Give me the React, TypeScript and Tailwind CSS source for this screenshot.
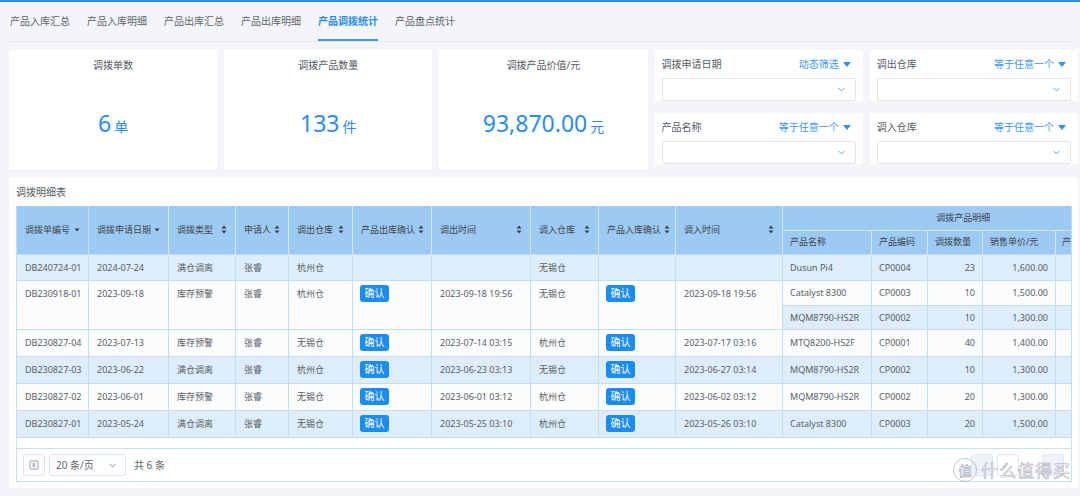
import { ChevronDown } from "lucide-react"

const tabs = ["产品入库汇总", "产品入库明细", "产品出库汇总", "产品出库明细", "产品调拨统计", "产品盘点统计"]

const stats = [
  { title: "调拨单数", value: "6", unit: "单" },
  { title: "调拨产品数量", value: "133", unit: "件" },
  { title: "调拨产品价值/元", value: "93,870.00", unit: "元" },
]

const cols = [72, 80, 67, 53, 64, 79, 99, 68, 77, 107, 89, 56, 55, 73, 18]

const heads = [
  { label: "调拨单编号", icon: "caret" },
  { label: "调拨申请日期", icon: "caret" },
  { label: "调拨类型", icon: "sort" },
  { label: "申请人", icon: "sort" },
  { label: "调出仓库", icon: "sort" },
  { label: "产品出库确认", icon: "sort" },
  { label: "调出时间", icon: "sort" },
  { label: "调入仓库", icon: "sort" },
  { label: "产品入库确认", icon: "sort" },
  { label: "调入时间", icon: "sort" },
]

type Item = [string, string, number, string]

const orders: {
  id: string
  date: string
  type: string
  person: string
  from: string
  outOk: boolean
  outTime: string
  to: string
  inOk: boolean
  inTime: string
  items: Item[]
}[] = [
  { id: "DB240724-01", date: "2024-07-24", type: "满仓调离", person: "张睿", from: "杭州仓", outOk: false, outTime: "", to: "无锡仓", inOk: false, inTime: "", items: [["Dusun Pi4", "CP0004", 23, "1,600.00"]] },
  {
    id: "DB230918-01", date: "2023-09-18", type: "库存预警", person: "张睿", from: "杭州仓", outOk: true, outTime: "2023-09-18 19:56", to: "无锡仓", inOk: true, inTime: "2023-09-18 19:56",
    items: [
      ["Catalyst 8300", "CP0003", 10, "1,500.00"],
      ["MQM8790-HS2R", "CP0002", 10, "1,300.00"],
    ],
  },
  { id: "DB230827-04", date: "2023-07-13", type: "库存预警", person: "张睿", from: "无锡仓", outOk: true, outTime: "2023-07-14 03:15", to: "杭州仓", inOk: true, inTime: "2023-07-17 03:16", items: [["MTQ8200-HS2F", "CP0001", 40, "1,400.00"]] },
  { id: "DB230827-03", date: "2023-06-22", type: "满仓调离", person: "张睿", from: "杭州仓", outOk: true, outTime: "2023-06-23 03:13", to: "无锡仓", inOk: true, inTime: "2023-06-27 03:14", items: [["MQM8790-HS2R", "CP0002", 10, "1,300.00"]] },
  { id: "DB230827-02", date: "2023-06-01", type: "库存预警", person: "张睿", from: "无锡仓", outOk: true, outTime: "2023-06-01 03:12", to: "杭州仓", inOk: true, inTime: "2023-06-02 03:12", items: [["MQM8790-HS2R", "CP0002", 20, "1,300.00"]] },
  { id: "DB230827-01", date: "2023-05-24", type: "满仓调离", person: "张睿", from: "无锡仓", outOk: true, outTime: "2023-05-25 03:10", to: "杭州仓", inOk: true, inTime: "2023-05-26 03:10", items: [["Catalyst 8300", "CP0003", 20, "1,500.00"]] },
]

const filters = [
  { label: "调拨申请日期", mode: "动态筛选" },
  { label: "调出仓库", mode: "等于任意一个" },
  { label: "产品名称", mode: "等于任意一个" },
  { label: "调入仓库", mode: "等于任意一个" },
]

function SortIcon() {
  return (
    <svg width="6" height="9" viewBox="0 0 6 9" className="shrink-0">
      <path d="M3 0.5 L5.5 3.5 H0.5 Z" fill="#3a3f47" />
      <path d="M3 8.5 L5.5 5.5 H0.5 Z" fill="#3a3f47" />
    </svg>
  )
}

function CaretIcon() {
  return (
    <svg width="6" height="4" viewBox="0 0 6 4" className="shrink-0">
      <path d="M0.5 0.5 H5.5 L3 3.5 Z" fill="#3a3f47" />
    </svg>
  )
}

function Confirm() {
  return (
    <span className="inline-flex h-[17px] w-[29px] items-center justify-center rounded-[3px] bg-[#1a8cf2] text-[10px] text-white">
      确认
    </span>
  )
}

function FilterCard({ label, mode }: { label: string; mode: string }) {
  return (
    <div className="flex flex-col bg-white px-[7px] pt-[7px]">
      <div className="flex h-[15px] items-center justify-between pr-[5px] text-[10px]">
        <span className="text-[#555a62]">{label}</span>
        <span className="flex items-center gap-[4px] text-[#3b97f4]">
          {mode}
          <svg width="8" height="5" viewBox="0 0 8 5">
            <path d="M0 0 H8 L4 5 Z" fill="#2f8ff2" />
          </svg>
        </span>
      </div>
      <div className="mt-[6px] flex h-[23px] items-center justify-end rounded-[2px] border border-[#e1e4ea] pr-[8px]">
        <ChevronDown className="h-[11px] w-[11px] text-[#4a9ef2]" strokeWidth={2} />
      </div>
    </div>
  )
}

export default function App() {
  let flat = 0
  return (
    <div className="h-[496px] w-[1080px] overflow-hidden bg-[#f3f5f9] font-['Noto_Sans','Noto_Sans_CJK_SC',sans-serif] text-[#5a5e66]">
      <div className="h-[2px] bg-[#2b8df0]" />

      <div className="ml-[10px] mr-[10px] flex h-[40px] items-end gap-[17px] border-b border-[#e3e6eb]">
        {tabs.map((t) => {
          const active = t === "产品调拨统计"
          return (
            <div
              key={t}
              className={
                active
                  ? "border-b-2 border-[#3c97f2] pb-[10px] text-[10px] font-bold text-[#2b8df0]"
                  : "border-b-2 border-transparent pb-[10px] text-[10px] text-[#60646c]"
              }
            >
              {t}
            </div>
          )
        })}
      </div>

      <div className="pl-[9px] pr-[2px] pt-[8px]">
        <div className="grid grid-cols-5 grid-rows-[56px_56px] gap-[7px]">
          {stats.map((s) => (
            <div key={s.title} className="row-span-2 flex flex-col items-center bg-white pt-[8px]">
              <div className="text-[10px] leading-[14px] text-[#555a62]">{s.title}</div>
              <div className="mt-[40px] flex items-baseline gap-[3px] text-[#2a8cf2]">
                <span className="text-[23px] leading-none">{s.value}</span>
                <span className="text-[14px] leading-none">{s.unit}</span>
              </div>
            </div>
          ))}
          <div className="col-start-4 row-start-1">
            <FilterCard {...filters[0]} />
          </div>
          <div className="col-start-5 row-start-1">
            <FilterCard {...filters[1]} />
          </div>
          <div className="col-start-4 row-start-2">
            <FilterCard {...filters[2]} />
          </div>
          <div className="col-start-5 row-start-2">
            <FilterCard {...filters[3]} />
          </div>
        </div>

        <div className="relative mt-[8px] overflow-hidden bg-white pb-[6px] pl-[7px] pr-[6px] pt-[8px]">
          <div className="h-[14px] text-[10px] leading-[14px] text-[#555a62]">调拨明细表</div>
          <div className="mt-[7px]">
            <div className="overflow-hidden border-r border-[#c4ddf4]">
              <table className="w-[1056px] table-fixed border-collapse text-[9px]">
                <colgroup>
                  {cols.map((w, i) => (
                    <col key={i} style={{ width: w }} />
                  ))}
                </colgroup>
                <thead className="bg-[#9ccaf3] text-[#40454d]">
                  <tr className="h-[24px]">
                    {heads.map((h, i) => (
                      <th
                        key={h.label}
                        rowSpan={2}
                        className={
                          i === 0
                            ? "border-x border-[#c4ddf4] px-[8px] text-left font-normal"
                            : "border-r border-[#d2e6f9] px-[8px] text-left font-normal"
                        }
                      >
                        <div className="flex items-center justify-between gap-[3px] whitespace-nowrap">
                          <span>{h.label}</span>
                          {h.icon === "sort" ? <SortIcon /> : <CaretIcon />}
                        </div>
                      </th>
                    ))}
                    <th colSpan={5} className="border-b border-[#d2e6f9] pl-[70px] text-center font-normal">
                      调拨产品明细
                    </th>
                  </tr>
                  <tr className="h-[24px]">
                    {["产品名称", "产品编码", "调拨数量", "销售单价/元"].map((l) => (
                      <th key={l} className="border-r border-[#d2e6f9] px-[7px] text-left font-normal whitespace-nowrap">
                        {l}
                      </th>
                    ))}
                    <th className="pl-[6px] text-left font-normal">产</th>
                  </tr>
                </thead>
                <tbody>
                  {orders.map((o) =>
                    o.items.map((it, k) => {
                      const bg = flat++ % 2 === 0 ? "bg-[#ddedfb]" : "bg-[#fafcfe]"
                      const rowBg = k === 0 ? bg : ""
                      const h = o.items.length > 1 ? "h-[24.5px]" : o.outOk ? "h-[27px]" : "h-[24px]"
                      const cell = "border border-[#c4ddf4] px-[8px] align-top py-[6px] whitespace-nowrap"
                      const btn = "border border-[#c4ddf4] px-[7px] align-top py-[4px]"
                      const mid = "border border-[#c4ddf4] px-[7px] align-middle whitespace-nowrap " + bg
                      return (
                        <tr key={o.id + k} className={h + " " + rowBg}>
                          {k === 0 && (
                            <>
                              <td rowSpan={o.items.length} className={cell}>{o.id}</td>
                              <td rowSpan={o.items.length} className={cell}>{o.date}</td>
                              <td rowSpan={o.items.length} className={cell}>{o.type}</td>
                              <td rowSpan={o.items.length} className={cell}>{o.person}</td>
                              <td rowSpan={o.items.length} className={cell}>{o.from}</td>
                              <td rowSpan={o.items.length} className={btn}>{o.outOk && <Confirm />}</td>
                              <td rowSpan={o.items.length} className={cell}>{o.outTime}</td>
                              <td rowSpan={o.items.length} className={cell}>{o.to}</td>
                              <td rowSpan={o.items.length} className={btn}>{o.inOk && <Confirm />}</td>
                              <td rowSpan={o.items.length} className={cell}>{o.inTime}</td>
                            </>
                          )}
                          <td className={mid}>{it[0]}</td>
                          <td className={mid}>{it[1]}</td>
                          <td className={mid + " text-right"}>{it[2]}</td>
                          <td className={mid + " text-right"}>{it[3]}</td>
                          <td className={mid}></td>
                        </tr>
                      )
                    })
                  )}
                </tbody>
              </table>
            </div>
            <div className="h-[11px] border-x border-b border-[#c8e0f6]" />
            <div className="flex h-[33px] items-center border-x border-b border-[#c8e0f6] pl-[6px] pr-[7px]">
              <div className="flex h-[22px] w-[22px] items-center justify-center rounded-[3px] border border-[#d6e6f6]">
                <svg width="10" height="10" viewBox="0 0 10 10">
                  <rect x="1" y="1" width="8" height="8" rx="1" fill="none" stroke="#8a9099" strokeWidth="0.9" />
                  <path d="M4.2 3 V7 M5.8 3 V7" stroke="#8a9099" strokeWidth="0.9" />
                </svg>
              </div>
              <div className="ml-[4px] flex h-[22px] w-[77px] items-center justify-between rounded-[3px] border border-[#d6e6f6] pl-[6px] pr-[7px] text-[10px] text-[#60646c]">
                <span>20 条/页</span>
                <ChevronDown className="h-[11px] w-[11px] text-[#60646c]" strokeWidth={1.6} />
              </div>
              <span className="ml-[8px] text-[10px] text-[#60646c]">共 6 条</span>
              <div className="ml-auto flex items-center">
                <div className="h-[22px] w-[22px] rounded-[3px] border border-[#dbe8f6] bg-[#eef3f9]" />
                <div className="ml-[4px] h-[22px] w-[22px] rounded-[3px] border border-[#dbe8f6] bg-white" />
                <div className="ml-[23px] h-[22px] w-[22px] rounded-[3px] border border-[#dbe8f6] bg-[#eef3f9]" />
              </div>
            </div>
          </div>

          <div className="pointer-events-none absolute bottom-[5px] right-[7px] flex items-center gap-[4px] text-[17px] text-white [-webkit-text-stroke:0.6px_#9aa0a8] opacity-80">
            <span className="flex h-[24px] w-[24px] items-center justify-center rounded-full border border-[#b0b5bb] text-[14px]">值</span>
            <span className="tracking-[1px]">什么值得买</span>
          </div>
        </div>
      </div>
    </div>
  )
}
